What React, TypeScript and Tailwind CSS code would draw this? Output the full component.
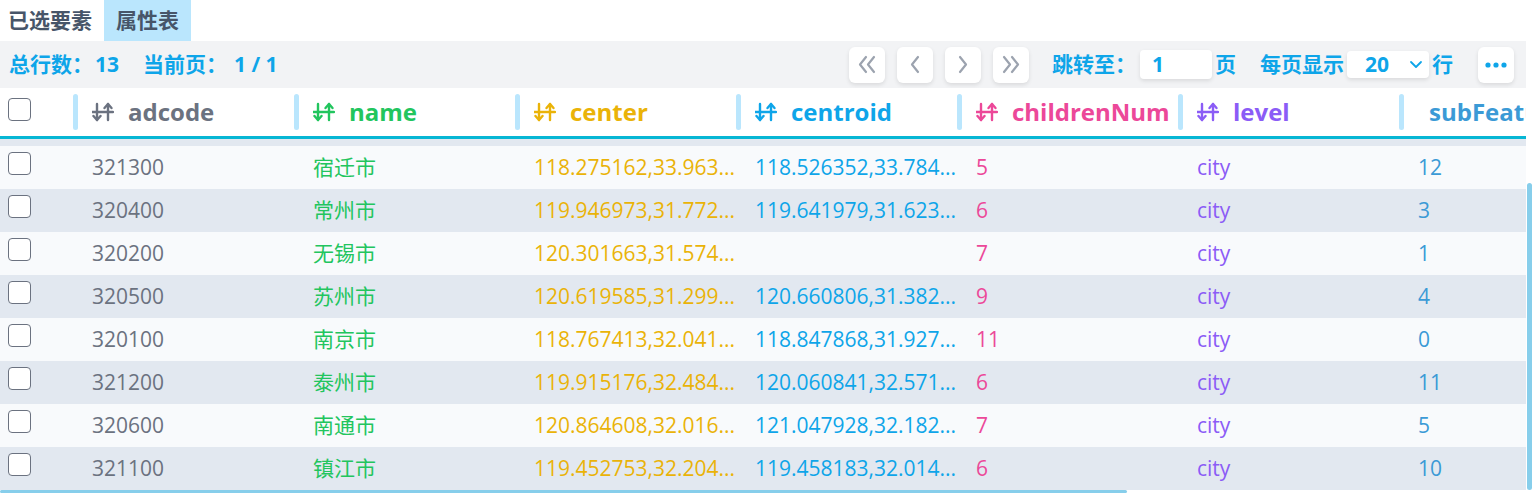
import React from "react";

const FONT = "font-['Open_Sans','Noto_Sans_CJK_SC',sans-serif]";

type Col = { key: string; label: string; head: string; cell: string; icon: boolean };

const cols: Col[] = [
  { key: "adcode", label: "adcode", head: "text-[#6b7280]", cell: "text-[#6b7280]", icon: true },
  { key: "name", label: "name", head: "text-[#22c55e]", cell: "text-[#22c55e]", icon: true },
  { key: "center", label: "center", head: "text-[#eab308]", cell: "text-[#eab308]", icon: true },
  { key: "centroid", label: "centroid", head: "text-[#0ea5e9]", cell: "text-[#0ea5e9]", icon: true },
  { key: "childrenNum", label: "childrenNum", head: "text-[#ec4899]", cell: "text-[#ec4899]", icon: true },
  { key: "level", label: "level", head: "text-[#8b5cf6]", cell: "text-[#8b5cf6]", icon: true },
  { key: "subFeatures", label: "subFeatures", head: "text-[#3b9ad6]", cell: "text-[#3b9ad6]", icon: false },
];

const rows: string[][] = [
  ["321300", "宿迁市", "118.275162,33.963...", "118.526352,33.784...", "5", "city", "12"],
  ["320400", "常州市", "119.946973,31.772...", "119.641979,31.623...", "6", "city", "3"],
  ["320200", "无锡市", "120.301663,31.574...", "", "7", "city", "1"],
  ["320500", "苏州市", "120.619585,31.299...", "120.660806,31.382...", "9", "city", "4"],
  ["320100", "南京市", "118.767413,32.041...", "118.847868,31.927...", "11", "city", "0"],
  ["321200", "泰州市", "119.915176,32.484...", "120.060841,32.571...", "6", "city", "11"],
  ["320600", "南通市", "120.864608,32.016...", "121.047928,32.182...", "7", "city", "5"],
  ["321100", "镇江市", "119.452753,32.204...", "119.458183,32.014...", "6", "city", "10"],
];

function SortIcon() {
  return (
    <svg width="22" height="20" viewBox="0 0 22 20" fill="none" stroke="currentColor" strokeWidth="2.4" strokeLinecap="round" strokeLinejoin="round">
      <line x1="5" y1="2" x2="5" y2="18" />
      <polyline points="1.5,14 5,18 8.5,14" />
      <line x1="16" y1="2" x2="16" y2="18" />
      <polyline points="12.5,6 16,2 19.5,6" />
      <line x1="0.5" y1="10" x2="21" y2="10" />
    </svg>
  );
}

function Checkbox() {
  return <div className="w-[23px] h-[23px] rounded-[4px] border-[1.5px] border-[#6b7280] bg-white" />;
}

function Chev({ dir, double }: { dir: "l" | "r"; double?: boolean }) {
  const single = (ox: number) =>
    dir === "l" ? `${ox + 8},2 ${ox + 2},9.5 ${ox + 8},17` : `${ox + 2},2 ${ox + 8},9.5 ${ox + 2},17`;
  return (
    <svg width={double ? 19 : 10} height="19" viewBox={double ? "0 0 19 19" : "0 0 10 19"} fill="none" stroke="#9ca3af" strokeWidth="2.2" strokeLinecap="round" strokeLinejoin="round">
      <polyline points={single(0)} />
      {double && <polyline points={single(8)} />}
    </svg>
  );
}

function PageBtn({ children }: { children: React.ReactNode }) {
  return (
    <div className="w-[36px] h-[36px] rounded-[6px] bg-white shadow-[0_2px_4px_rgba(0,0,0,0.1)] flex items-center justify-center">
      {children}
    </div>
  );
}

export default function App() {
  return (
    <div className={`w-[1534px] h-[493px] bg-white overflow-hidden flex flex-col ${FONT}`}>
      {/* tabs */}
      <div className="h-[41px] flex items-stretch shrink-0">
        <div className="pl-[8px] pr-[12px] flex items-center text-[21px] font-bold text-[#475569]">已选要素</div>
        <div className="px-[12px] flex items-center text-[21px] font-bold text-[#475569] bg-[#bae6fd]">属性表</div>
      </div>

      {/* toolbar */}
      <div className="w-[1526px] h-[47px] shrink-0 bg-[#f2f3f5] flex items-center text-[21px] font-bold text-[#0ea5e9]">
        <div className="pl-[9px] flex items-center">
          <span>总行数：</span>
          <span className="ml-[2px]">13</span>
          <span className="ml-[24px]">当前页：</span>
          <span className="ml-[7px]">1 / 1</span>
        </div>
        <div className="ml-auto flex items-center pr-[12px]">
          <div className="flex items-center gap-[12px]">
            <PageBtn><Chev dir="l" double /></PageBtn>
            <PageBtn><Chev dir="l" /></PageBtn>
            <PageBtn><Chev dir="r" /></PageBtn>
            <PageBtn><Chev dir="r" double /></PageBtn>
          </div>
          <span className="ml-[23px]">跳转至：</span>
          <div className="ml-[4px] w-[72px] h-[29px] bg-white rounded-[4px] shadow-[0_2px_4px_rgba(0,0,0,0.1)] flex items-center pl-[12px]">1</div>
          <span className="ml-[3px]">页</span>
          <span className="ml-[24px]">每页显示</span>
          <div className="ml-[3px] w-[82px] h-[27px] bg-white rounded-[4px] shadow-[0_2px_4px_rgba(0,0,0,0.1)] flex items-center pl-[18px] pr-[6px]">
            <span>20</span>
            <svg className="ml-auto" width="14" height="9" viewBox="0 0 14 9" fill="none" stroke="#0ea5e9" strokeWidth="1.8" strokeLinecap="round" strokeLinejoin="round">
              <polyline points="2,2 7,7 12,2" />
            </svg>
          </div>
          <span className="ml-[3px]">行</span>
          <div className="ml-[25px]">
            <PageBtn>
              <svg width="22" height="6" viewBox="0 0 22 6" fill="#0ea5e9">
                <circle cx="3" cy="3" r="2.6" />
                <circle cx="11" cy="3" r="2.6" />
                <circle cx="19" cy="3" r="2.6" />
              </svg>
            </PageBtn>
          </div>
        </div>
      </div>

      {/* table */}
      <div className="flex flex-1 min-h-0">
        <div className="w-[1526px] overflow-hidden flex flex-col">
          {/* header */}
          <div className="flex h-[51px] shrink-0 bg-white border-b-[3px] border-[#06b6d4]">
            <div className="w-[73px] shrink-0 pl-[8px] pt-[10px]">
              <Checkbox />
            </div>
            {cols.map((c) => (
              <div key={c.key} className={`w-[221px] shrink-0 flex items-center ${c.head}`}>
                <div className="w-[5px] h-[36px] rounded-full bg-[#bae6fd]" />
                {c.icon ? (
                  <>
                    <div className="ml-[14px] flex items-center"><SortIcon /></div>
                    <span className="ml-[14px] text-[24px] font-bold whitespace-nowrap">{c.label}</span>
                  </>
                ) : (
                  <span className="ml-[25px] text-[24px] font-bold whitespace-nowrap">{c.label}</span>
                )}
              </div>
            ))}
          </div>
          {/* scrolled strip */}
          <div className="h-[7px] shrink-0 bg-[#e2e8f0]" />
          {/* rows */}
          {rows.map((r, i) => (
            <div key={i} className={`flex h-[43px] shrink-0 ${i % 2 === 0 ? "bg-[#f8fafc]" : "bg-[#e2e8f0]"}`}>
              <div className="w-[73px] shrink-0 pl-[8px] pt-[6px]">
                <Checkbox />
              </div>
              {cols.map((c, j) => (
                <div key={c.key} className={`w-[221px] shrink-0 pl-[19px] flex items-center text-[21px] whitespace-nowrap ${c.cell}`}>
                  {r[j]}
                </div>
              ))}
            </div>
          ))}
        </div>
        {/* vertical scrollbar */}
        <div className="w-[8px] shrink-0 pt-[95px]">
          <div className="w-[5px] ml-[1px] h-[307px] rounded-full bg-[#87ceeb]" />
        </div>
      </div>
      {/* horizontal scrollbar */}
      <div className="h-[3px] shrink-0 flex">
        <div className="w-[1127px] h-[3px] rounded-full bg-[#87ceeb]" />
      </div>
    </div>
  );
}
